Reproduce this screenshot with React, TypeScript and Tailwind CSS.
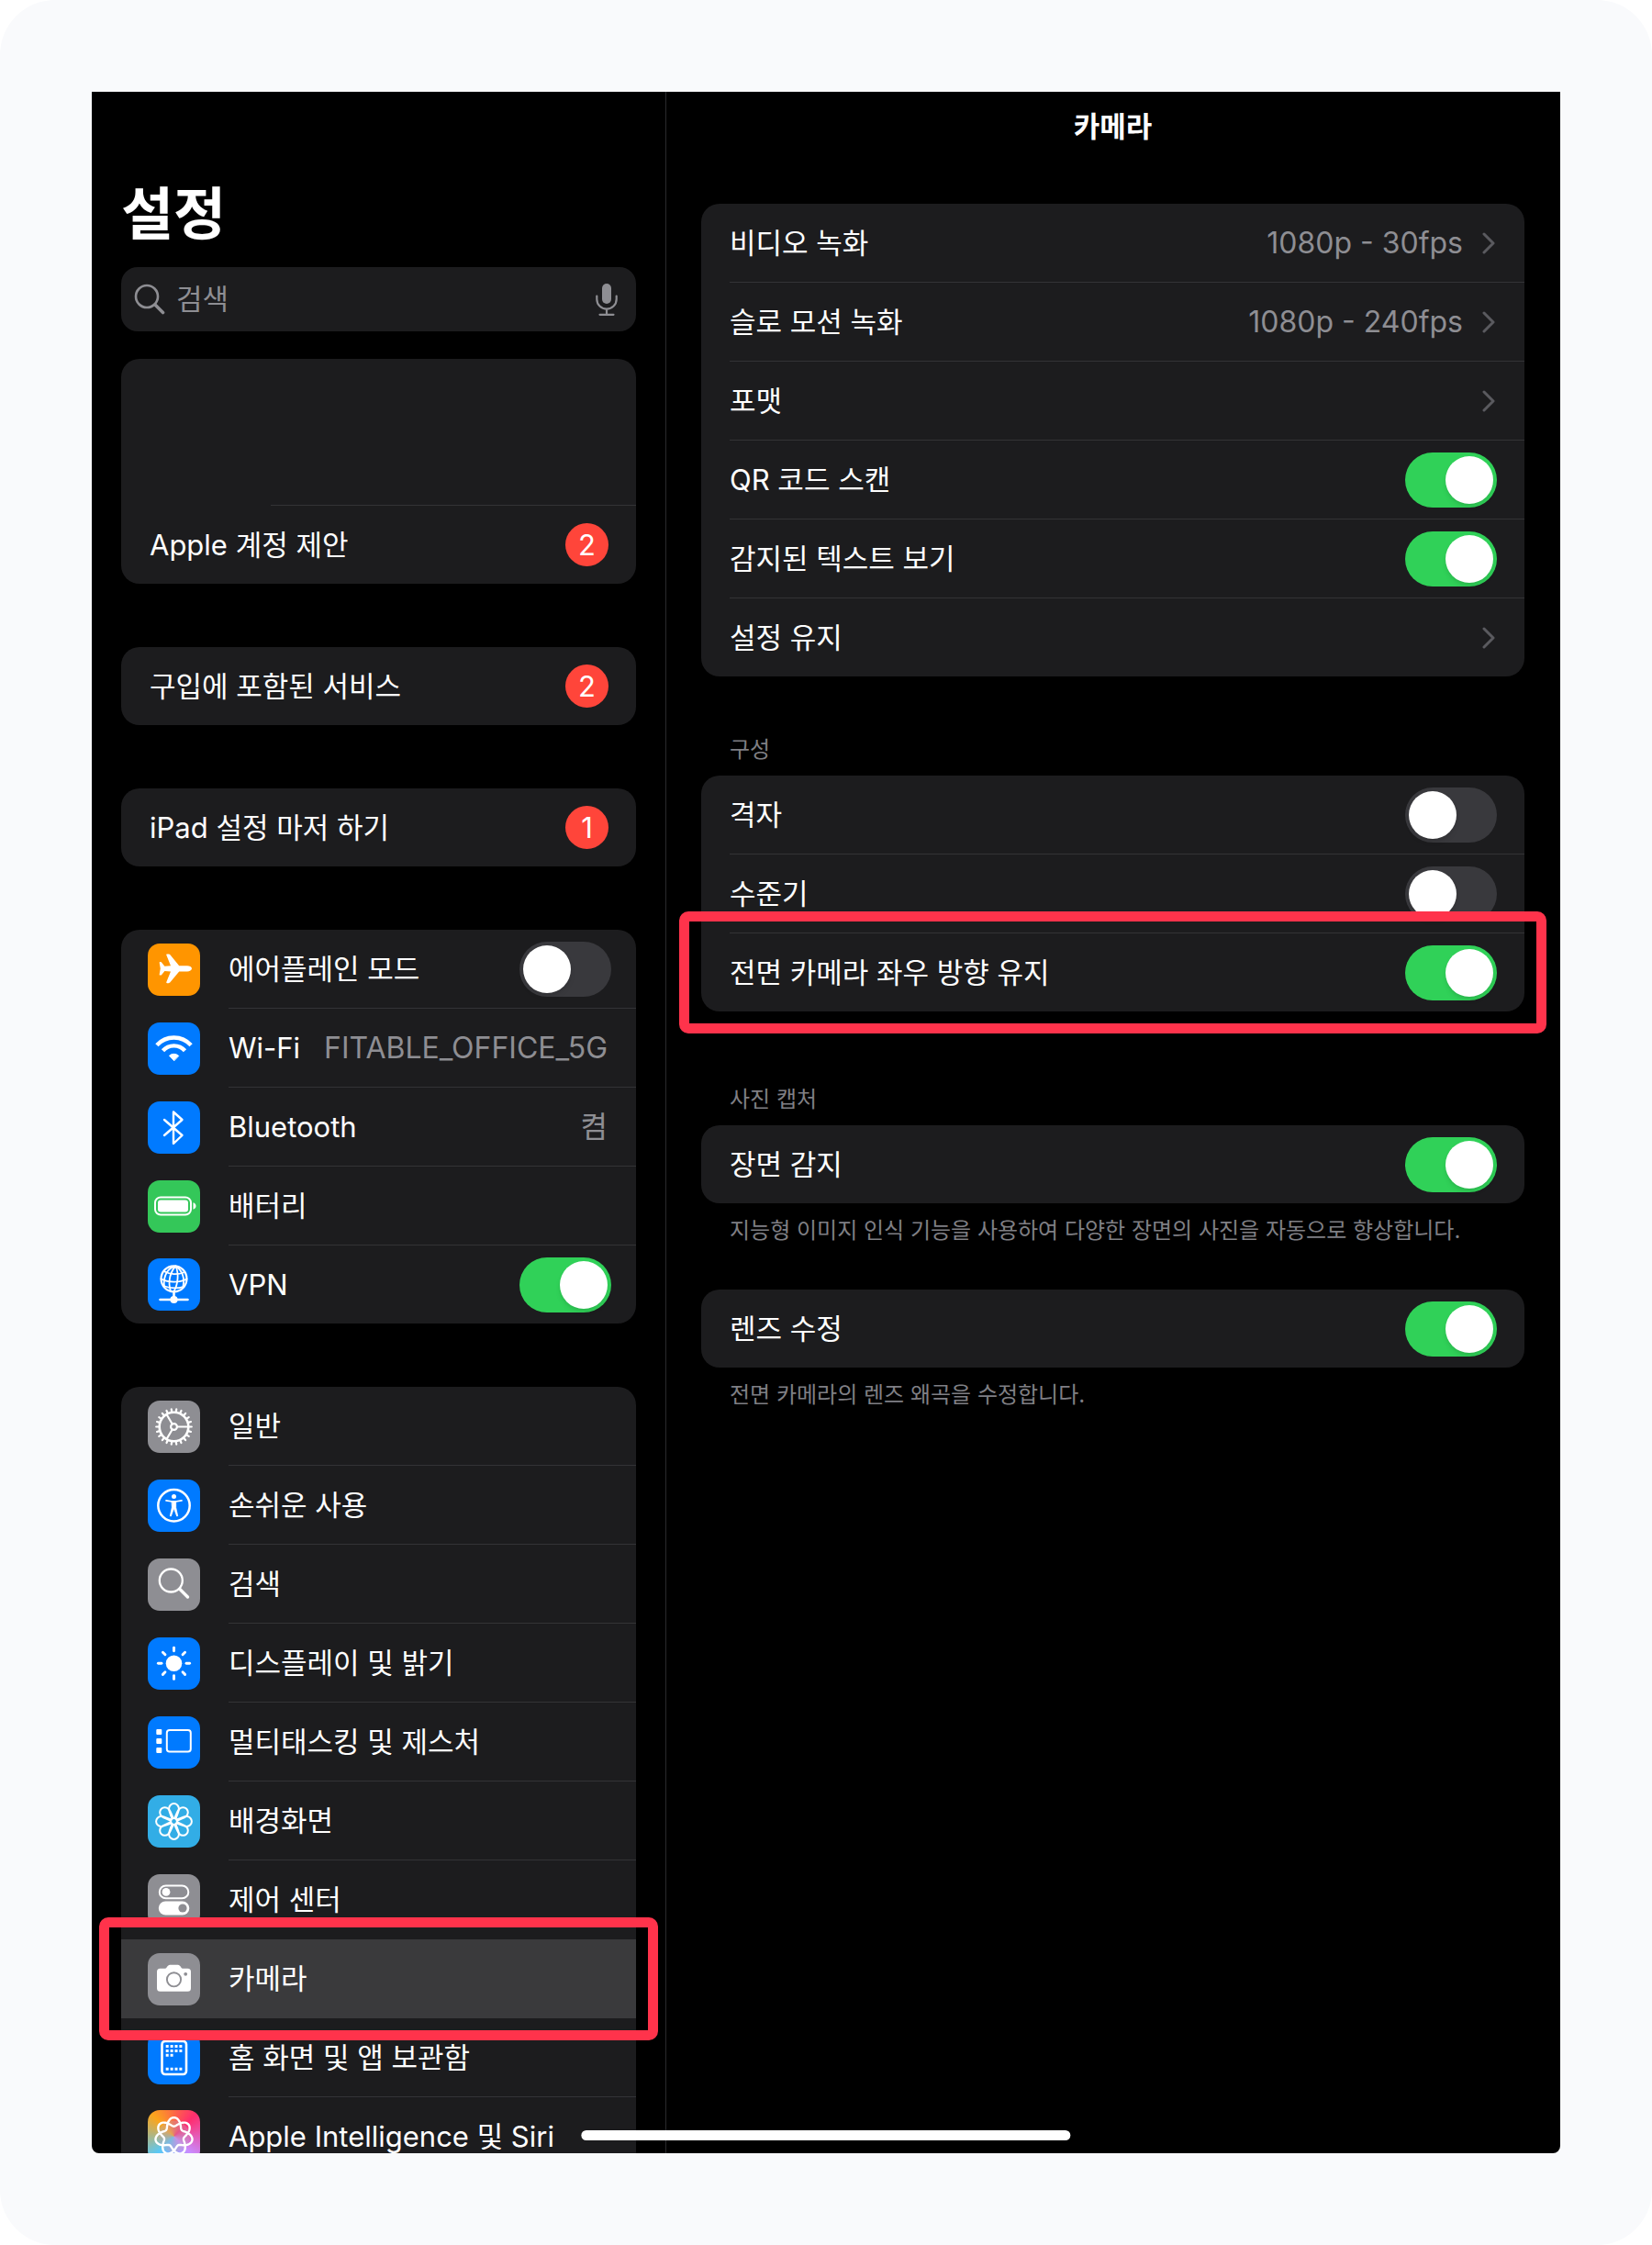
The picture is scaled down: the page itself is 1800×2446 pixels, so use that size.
import React from "react";

type RowProps = {
  label: string;
  icon?: React.ReactNode;
  value?: string;
  badge?: number;
  toggle?: boolean;
  chevron?: boolean;
  selected?: boolean;
  marked?: boolean;
  noDivider?: boolean;
};

// Seven-lobed loop, two turns around the centre
const loopPoints = Array.from({ length: 241 }, (_, i) => {
  const t = (i / 240) * Math.PI * 4;
  const r = 15.6 + 4.8 * Math.cos(3.5 * t);
  return `${(28.5 + r * Math.sin(t)).toFixed(2)},${(28.5 - r * Math.cos(t)).toFixed(2)}`;
}).join(" ");

const Tile: React.FC<{ bg: string; children: React.ReactNode }> = ({ bg, children }) => (
  <span className={`block size-[57px] shrink-0 overflow-hidden rounded-[13px] text-white ${bg}`}>
    <svg viewBox="0 0 57 57" className="size-full" fill="none" stroke="currentColor" strokeLinecap="round" strokeLinejoin="round" aria-hidden="true">
      {children}
    </svg>
  </span>
);

const AirplaneIcon = () => (
  <Tile bg="bg-[#ff9500]">
    <path
      fill="currentColor"
      stroke="none"
      d="M48 27.3c0-2-2.5-3.1-5-3.1h-8.800L24.600 12.500c-.6-.8-1.200-1.100-2.100-1.100h-1.400c-.7 0-1 .5-.8 1.100L25 24.200l-6.600.5-3.200-4c-.3-.4-.6-.6-1.100-.6h-.7c-.5 0-.8.4-.7.9l1.100 6.300-1.100 6.300c-.1.5.2.9.7.9h.7c.5 0 .8-.2 1.100-.6l3.200-4 6.600.5-4.700 11.700c-.2.6.1 1.100.8 1.100h1.400c.9 0 1.500-.3 2.100-1.100l9.600-11.700H43c2.500 0 5-1.100 5-3.100z"
    />
  </Tile>
);

const WifiIcon = () => (
  <Tile bg="bg-[#007aff]">
    <g strokeWidth="4.4" strokeLinecap="butt">
      <path d="M9.9 24.800a25 25 0 0 1 37.200 0" />
      <path d="M16.500 30.800a16 16 0 0 1 24 0" />
    </g>
    <path d="M28.500 41.500l-5-5.300a7.400 7.400 0 0 1 10 0z" fill="currentColor" strokeWidth="1" />
  </Tile>
);

const BluetoothIcon = () => (
  <Tile bg="bg-[#007aff]">
    <path d="M18 20l19.500 17L28 46V11.500l9.500 8.500L18 37" strokeWidth="2.4" />
  </Tile>
);

const BatteryIcon = () => (
  <Tile bg="bg-[#34c759]">
    <rect x="8" y="18.5" width="39" height="19" rx="6" strokeWidth="2" />
    <rect x="11" y="21.5" width="33" height="13" rx="3" fill="currentColor" stroke="none" />
    <path d="M49.500 24.300c2 .6 3 2 3 3.700s-1 3.100-3 3.700z" fill="currentColor" stroke="none" />
  </Tile>
);

const VpnIcon = () => (
  <Tile bg="bg-[#007aff]">
    <g strokeWidth="1.8">
      <circle cx="28.5" cy="22.3" r="14" strokeWidth="2.2" />
      <path d="M30.500 8.500c-6 6-9 17-5.500 27.500M30.500 8.500c3.500 8 2.500 20-2 27.500M30.500 8.500c7 4.500 10 13 8 22M30.500 8.500C22 10 16.500 19 18 31" />
      <path d="M18.500 14.500c5.500 3 14 3.500 20.500 1M14.500 22.500c8 4 19.500 4.500 28 0M17 30c7 2.800 15.500 3 22.500.8" />
      <path d="M28.500 36.500V42M13.500 45H43.500" strokeWidth="2.6" />
      <circle cx="28.5" cy="45" r="3.2" fill="currentColor" />
    </g>
  </Tile>
);

const GearIcon = () => (
  <Tile bg="bg-[#8e8e93]">
    <circle cx="28.5" cy="28.5" r="15.8" strokeWidth="2.6" />
    <circle cx="28.5" cy="28.5" r="3.4" strokeWidth="2.2" />
    {Array.from({ length: 22 }, (_, i) => (
      <path key={i} d="M45 28.500h2.800" strokeWidth="2.2" transform={`rotate(${(i * 360) / 22} 28.5 28.5)`} />
    ))}
    <path d="M32 28.500h12M26.700 25.500L20.500 15M26.700 31.500L20.500 42" strokeWidth="2.2" />
  </Tile>
);

const AccessibilityIcon = () => (
  <Tile bg="bg-[#007aff]">
    <circle cx="28.5" cy="28.3" r="17.2" strokeWidth="2.5" />
    <circle cx="28.5" cy="18.6" r="2.5" fill="currentColor" stroke="none" />
    <path d="M20 22.900l6.800 1.100h3.400l6.800-1.100" strokeWidth="1.7" />
    <path
      d="M26.300 23.800h4.400v6.700l2 9.200-1 .3-3.200-8.500-3.200 8.500-1-.3 2-9.200z"
      fill="currentColor"
      strokeWidth=".8"
    />
  </Tile>
);

const SearchTileIcon = () => (
  <Tile bg="bg-[#8e8e93]">
    <circle cx="25.3" cy="24" r="12.5" strokeWidth="2.3" />
    <path d="M35 33.500l8.500 8.500" strokeWidth="3.4" />
  </Tile>
);

const BrightnessIcon = () => (
  <Tile bg="bg-[#007aff]">
    <circle cx="28.5" cy="28.3" r="8.8" fill="currentColor" stroke="none" />
    {[0, 45, 90, 135, 180, 225, 270, 315].map((a) => (
      <path key={a} d="M28.500 11.200v3.600" strokeWidth="2.9" transform={`rotate(${a} 28.5 28.3)`} />
    ))}
  </Tile>
);

const MultitaskIcon = () => (
  <Tile bg="bg-[#007aff]">
    <rect x="20.8" y="15" width="26" height="23.5" rx="3" strokeWidth="2" />
    <g fill="currentColor" stroke="none">
      <rect x="9.3" y="14" width="6" height="6" rx="1" />
      <rect x="9.3" y="24" width="6" height="6" rx="1" />
      <rect x="9.3" y="34" width="6" height="6" rx="1" />
    </g>
  </Tile>
);

const WallpaperIcon = () => (
  <Tile bg="bg-[#32ade6]">
    {[0, 45, 90, 135, 180, 225, 270, 315].map((a) => (
      <path
        key={a}
        d="M26.500 25.500c-1-3.500-3.400-7-3.400-11a5.400 5.400 0 0 1 10.800 0c0 4-2.400 7.500-3.400 11"
        strokeWidth="2"
        transform={`rotate(${a} 28.5 28.5)`}
      />
    ))}
    <circle cx="28.5" cy="28.5" r="3.3" strokeWidth="1.8" />
  </Tile>
);

const ControlCenterIcon = () => (
  <Tile bg="bg-[#8e8e93]">
    <rect x="12.8" y="12.5" width="31.5" height="13.8" rx="6.9" strokeWidth="2" />
    <circle cx="20" cy="19.4" r="4.4" fill="currentColor" stroke="none" />
    <rect x="11.8" y="29.5" width="33.5" height="15" rx="7.5" fill="currentColor" stroke="none" />
    <circle cx="38" cy="37" r="4.6" fill="#8e8e93" stroke="none" />
  </Tile>
);

const CameraIcon = () => (
  <Tile bg="bg-[#8e8e93]">
    <path
      d="M13.500 16.800h5.600c1.500 0 2.300-4 5-4h8.800c2.700 0 3.500 4 5 4h5.600a3.500 3.500 0 0 1 3.500 3.500v18a3.500 3.500 0 0 1-3.500 3.500h-30a3.500 3.500 0 0 1-3.500-3.500v-18a3.500 3.500 0 0 1 3.500-3.500z"
      fill="currentColor"
      stroke="none"
    />
    <circle cx="28.5" cy="28.8" r="7.6" stroke="#8e8e93" strokeWidth="1.9" />
    <circle cx="41.2" cy="22.8" r="1.9" fill="#8e8e93" stroke="none" />
  </Tile>
);

const HomeScreenIcon = () => (
  <Tile bg="bg-[#007aff]">
    <rect x="15.5" y="10" width="26.5" height="36" rx="3.5" strokeWidth="2.6" />
    <g strokeWidth="3" strokeLinecap="butt" strokeDasharray="3 1.9">
      <path d="M19.700 15.500h18M19.700 20.400h18M19.700 25.300h8M19.700 40.300h18" />
    </g>
  </Tile>
);

const IntelligenceIcon = () => (
  <Tile bg="bg-[conic-gradient(from_45deg,#ff2d6f,#c98bff_90deg,#5ac8f5_180deg,#fba51c_270deg,#ff2d6f)]">
    <circle cx="28.5" cy="28.5" r="17" fill="#b9a4b8" fillOpacity=".35" stroke="none" />
    <polyline points={loopPoints} strokeWidth="2.4" />
  </Tile>
);

const Row: React.FC<RowProps> = ({ label, icon, value, badge, toggle, chevron, selected, marked, noDivider }) => {
  const hasToggle = toggle !== undefined;
  const inner = (
    <>
      {icon && <span className="mr-[31px] flex items-center">{icon}</span>}
      <span
        className={`flex min-h-[86px] flex-1 items-center border-b group-last:min-h-[85px] group-last:border-b-0 ${
          icon ? "pr-[27px]" : "pr-[30px]"
        } ${noDivider ? "border-transparent" : "border-[#333336]"}`}
      >
        <span className="flex-1 whitespace-nowrap">{label}</span>
        {value && (
          <span className={`text-[32px] whitespace-nowrap text-[#8e8e93] ${icon ? "mr-1" : ""}`}>{value}</span>
        )}
        {badge && (
          <span className="flex size-[47px] items-center justify-center rounded-full bg-[#ff453a]">{badge}</span>
        )}
        {chevron && (
          <svg viewBox="0 0 14 24" className="mr-0.5 ml-[21px] h-6 w-3.5 text-[#5a5a5f]" fill="none" stroke="currentColor" strokeWidth="3" strokeLinecap="round" strokeLinejoin="round" aria-hidden="true">
            <path d="M2 2l10 10L2 22" />
          </svg>
        )}
        {hasToggle && (
          <input
            type="checkbox"
            role="switch"
            defaultChecked={toggle}
            className="h-[60px] w-[100px] appearance-none rounded-full bg-[#39393d] p-1 before:block before:size-[52px] before:rounded-full before:bg-white before:shadow-md before:content-[''] checked:bg-[#30d158] checked:before:translate-x-10"
          />
        )}
      </span>
    </>
  );

  return (
    <li className={`group relative ${selected ? "bg-[#3a3a3c]" : ""}`}>
      {hasToggle ? (
        <label className={`flex ${icon ? "pl-[29px]" : "pl-[31px]"}`}>{inner}</label>
      ) : (
        <a href="#" className={`flex ${icon ? "pl-[29px]" : "pl-[31px]"}`}>
          {inner}
        </a>
      )}
      {marked && (
        <span className="pointer-events-none absolute -inset-6 z-10 rounded-[10px] border-[11px] border-[#ff334b]" />
      )}
    </li>
  );
};

const Card: React.FC<{ className?: string; children: React.ReactNode }> = ({ className = "", children }) => (
  <ul className={`rounded-[20px] bg-[#1c1c1e] ${className}`}>{children}</ul>
);

const Sidebar = () => (
  <nav className="overflow-hidden border-r border-[#2a2a2c] px-8 pt-[92px]">
    <h1 className="text-[62px] leading-[84px] font-bold">설정</h1>
    <div className="mt-[15px] flex h-[70px] items-center rounded-[18px] bg-[#1c1c1e] pr-5 pl-3.5 text-[#8e8e93]">
      <svg viewBox="0 0 34 34" className="size-[34px]" fill="none" stroke="currentColor" strokeLinecap="round" aria-hidden="true">
        <circle cx="14" cy="14" r="12" strokeWidth="2.6" />
        <path d="M23 23l8.500 8.500" strokeWidth="3.6" />
      </svg>
      <input
        type="text"
        aria-label="검색"
        placeholder="검색"
        className="ml-3 min-w-0 flex-1 bg-transparent outline-none placeholder:text-[#8e8e93]"
      />
      <button type="button" aria-label="음성 입력">
        <svg viewBox="0 0 24 36" className="h-9 w-6" fill="none" stroke="currentColor" strokeWidth="2.2" strokeLinecap="round" aria-hidden="true">
          <rect x="7" y="1" width="10" height="22" rx="5" fill="currentColor" stroke="none" />
          <path d="M1.300 14.500v3.500a10.700 10.700 0 0 0 21.400 0v-3.500M12 29v5.500M4.500 34.800h15" />
        </svg>
      </button>
    </div>

    <Card className="mt-[30px]">
      <li className="pl-[163px]">
        <div className="h-[160px] border-b border-[#333336]" />
      </li>
      <Row label="Apple 계정 제안" badge={2} />
    </Card>
    <Card className="mt-[69px]">
      <Row label="구입에 포함된 서비스" badge={2} />
    </Card>
    <Card className="mt-[69px]">
      <Row label="iPad 설정 마저 하기" badge={1} />
    </Card>

    <Card className="mt-[69px]">
      <Row icon={<AirplaneIcon />} label="에어플레인 모드" toggle={false} />
      <Row icon={<WifiIcon />} label="Wi-Fi" value="FITABLE_OFFICE_5G" />
      <Row icon={<BluetoothIcon />} label="Bluetooth" value="켬" />
      <Row icon={<BatteryIcon />} label="배터리" />
      <Row icon={<VpnIcon />} label="VPN" toggle={true} />
    </Card>

    <Card className="mt-[69px]">
      <Row icon={<GearIcon />} label="일반" />
      <Row icon={<AccessibilityIcon />} label="손쉬운 사용" />
      <Row icon={<SearchTileIcon />} label="검색" />
      <Row icon={<BrightnessIcon />} label="디스플레이 및 밝기" />
      <Row icon={<MultitaskIcon />} label="멀티태스킹 및 제스처" />
      <Row icon={<WallpaperIcon />} label="배경화면" />
      <Row icon={<ControlCenterIcon />} label="제어 센터" noDivider />
      <Row icon={<CameraIcon />} label="카메라" selected marked noDivider />
      <Row icon={<HomeScreenIcon />} label="홈 화면 및 앱 보관함" />
      <Row icon={<IntelligenceIcon />} label="Apple Intelligence 및 Siri" />
    </Card>
  </nav>
);

const CameraSettings = () => (
  <main className="overflow-hidden pr-[39px] pl-[38px]">
    <h2 className="py-4 text-center leading-[44px] font-bold">카메라</h2>

    <Card className="mt-[46px]">
      <Row label="비디오 녹화" value="1080p - 30fps" chevron />
      <Row label="슬로 모션 녹화" value="1080p - 240fps" chevron />
      <Row label="포맷" chevron />
      <Row label="QR 코드 스캔" toggle={true} />
      <Row label="감지된 텍스트 보기" toggle={true} />
      <Row label="설정 유지" chevron />
    </Card>

    <h3 className="mt-[62px] mb-2.5 pl-[31px] text-2xl leading-9 text-[#7f7f84]">구성</h3>
    <Card>
      <Row label="격자" toggle={false} />
      <Row label="수준기" toggle={false} />
      <Row label="전면 카메라 좌우 방향 유지" toggle={true} marked />
    </Card>

    <h3 className="mt-[78px] mb-2.5 pl-[31px] text-2xl leading-9 text-[#7f7f84]">사진 캡처</h3>
    <Card>
      <Row label="장면 감지" toggle={true} />
    </Card>
    <p className="mt-3 pl-[31px] text-2xl leading-9 text-[#7f7f84]">
      지능형 이미지 인식 기능을 사용하여 다양한 장면의 사진을 자동으로 향상합니다.
    </p>

    <Card className="mt-[46px]">
      <Row label="렌즈 수정" toggle={true} />
    </Card>
    <p className="mt-3 pl-[31px] text-2xl leading-9 text-[#7f7f84]">전면 카메라의 렌즈 왜곡을 수정합니다.</p>
  </main>
);

const App: React.FC = () => {
  return (
    <div className="bg-white">
      <div className="flex h-screen flex-col rounded-[60px] bg-[#f9fafc] p-[100px]">
        <div className="relative grid min-h-0 flex-1 grid-cols-[313fr_487fr] overflow-hidden rounded-b-lg bg-black font-[Inter,'Noto_Sans_CJK_KR',sans-serif] text-[31px] leading-[44px] text-white">
          <Sidebar />
          <CameraSettings />
          {/* Home indicator */}
          <div className="absolute bottom-3.5 left-1/2 h-[11px] w-1/3 -translate-x-1/2 rounded-full bg-white" />
        </div>
      </div>
    </div>
  );
};

export default App;
